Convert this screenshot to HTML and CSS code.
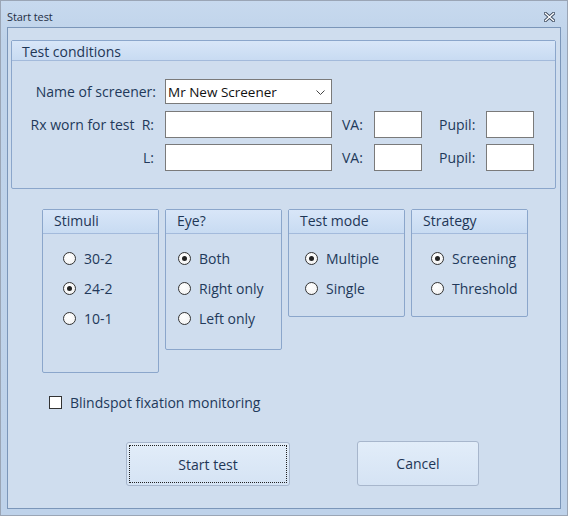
FILE: index.html
```html
<!DOCTYPE html>
<html>
<head>
<meta charset="utf-8">
<link rel="stylesheet" href="styles.css">
</head>
<body>
<div class="window">
  <div class="titlebar">
    <span class="title">Start test</span>
    <svg class="close" width="11" height="10" viewBox="0 0 11 10">
      <path d="M1.5 1.5 L9.5 8.5 M9.5 1.5 L1.5 8.5" stroke="#3c4a5e" stroke-width="3.2" stroke-linecap="square"/>
      <path d="M1.5 1.5 L9.5 8.5 M9.5 1.5 L1.5 8.5" stroke="#ffffff" stroke-width="1.4" stroke-linecap="square"/>
    </svg>
  </div>
  <div class="client">
    <div class="group conditions">
      <div class="ghead">Test conditions</div>
      <div class="cbody">
        <div class="row r1">
          <span class="lbl main">Name of screener:</span>
          <div class="combo">
            <span>Mr New Screener</span>
            <svg width="9" height="5" viewBox="0 0 9 5"><polyline points="0.5,0.5 4.5,4.5 8.5,0.5" fill="none" stroke="#444" stroke-width="1"/></svg>
          </div>
        </div>
        <div class="row r2">
          <span class="lbl main">Rx worn for test&nbsp; R:</span>
          <div class="field wide"></div>
          <span class="lbl va">VA:</span>
          <div class="field small"></div>
          <span class="lbl pupil">Pupil:</span>
          <div class="field small"></div>
        </div>
        <div class="row r3">
          <span class="lbl main">L:</span>
          <div class="field wide"></div>
          <span class="lbl va">VA:</span>
          <div class="field small"></div>
          <span class="lbl pupil">Pupil:</span>
          <div class="field small"></div>
        </div>
      </div>
    </div>

    <div class="options">
      <div class="group opt stimuli">
        <div class="ghead">Stimuli</div>
        <div class="obody">
          <div class="radio"><span class="dot"></span>30-2</div>
          <div class="radio"><span class="dot on"></span>24-2</div>
          <div class="radio"><span class="dot"></span>10-1</div>
        </div>
      </div>
      <div class="group opt eye">
        <div class="ghead">Eye?</div>
        <div class="obody">
          <div class="radio"><span class="dot on"></span>Both</div>
          <div class="radio"><span class="dot"></span>Right only</div>
          <div class="radio"><span class="dot"></span>Left only</div>
        </div>
      </div>
      <div class="group opt mode">
        <div class="ghead">Test mode</div>
        <div class="obody">
          <div class="radio"><span class="dot on"></span>Multiple</div>
          <div class="radio"><span class="dot"></span>Single</div>
        </div>
      </div>
      <div class="group opt strategy">
        <div class="ghead">Strategy</div>
        <div class="obody">
          <div class="radio"><span class="dot on"></span>Screening</div>
          <div class="radio"><span class="dot"></span>Threshold</div>
        </div>
      </div>
    </div>

    <div class="check"><span class="box"></span>Blindspot fixation monitoring</div>

    <div class="buttons">
      <div class="btn start"><span class="focus">Start test</span></div>
      <div class="btn cancel">Cancel</div>
    </div>
  </div>
</div>
</body>
</html>
```
FILE: styles.css
```css
* { box-sizing: border-box; }
html, body { margin: 0; padding: 0; }
body {
  width: 568px;
  height: 516px;
  overflow: hidden;
  font-family: "Open Sans", "Noto Sans", sans-serif;
  color: #22395a;
}
.window {
  width: 568px;
  height: 516px;
  border: 1px solid #9aa5b5;
  background: linear-gradient(#c7d9ee, #bfd3ea 40px, #bed2ea);
  padding: 0 6px 6px 6px;
  display: flex;
  flex-direction: column;
}
.titlebar {
  height: 26px;
  display: flex;
  align-items: center;
  justify-content: space-between;
  padding: 0 6px 0 0;
}
.title {
  font-size: 11px;
  color: #1f2f44;
  margin-top: 4px;
  letter-spacing: -0.1px;
}
.close { margin-top: 5px; }
.client {
  flex: 1;
  border: 1px solid #7b96b9;
  background: #cfddee;
  padding: 12px 0 0 3px;
}
.group {
  border: 1px solid #8ba6cb;
  border-radius: 2px;
  background: #cfddee;
}
.ghead {
  background: linear-gradient(#d8e6f8, #c8dbf2);
  border-bottom: 1px solid #a3badb;
  font-size: 14px;
  color: #1e3656;
  line-height: 21px;
  height: 20px;
  padding-left: 10px;
}
.conditions { width: 545px; height: 149px; }
.cbody { padding: 18px 0 0 0; }
.row { display: flex; align-items: center; }
.r1 { height: 25px; }
.r2 { height: 27px; margin-top: 7px; }
.r3 { height: 27px; margin-top: 6px; }
.lbl { font-size: 14px; color: #22395a; white-space: nowrap; }
.lbl.main { width: 144px; text-align: right; margin-right: 9px; }
.r2 .lbl.main, .r3 .lbl.main { width: 142px; margin-right: 11px; }
.combo {
  width: 167px;
  height: 25px;
  background: #fff;
  border: 1px solid #7a7a7a;
  display: flex;
  align-items: center;
  justify-content: space-between;
  padding: 0 6px 0 2px;
  font-size: 13.5px;
  color: #111;
}
.combo svg { margin-top: 1px; }
.field { height: 27px; background: #fff; border: 1px solid #7a7a7a; }
.field.wide { width: 167px; }
.field.small { width: 48px; }
.lbl.va { margin-left: 10px; width: 32px; }
.lbl.pupil { margin-left: 17px; width: 47px; }

.options {
  display: flex;
  align-items: flex-start;
  gap: 6px;
  margin: 20px 0 0 31px;
}
.opt { width: 117px; }
.opt .ghead { height: 24px; line-height: 22px; padding-left: 11px; }
.stimuli { height: 164px; }
.eye { height: 141px; }
.mode, .strategy { height: 108px; }
.obody { padding-top: 9px; }
.radio {
  height: 30px;
  display: flex;
  align-items: center;
  font-size: 14px;
  color: #22395a;
}
.stimuli .radio { padding-left: 20px; }
.eye .radio { padding-left: 12px; }
.mode .radio { padding-left: 16px; }
.strategy .radio { padding-left: 19px; }
.dot {
  width: 13px;
  height: 13px;
  border: 1px solid #333;
  border-radius: 50%;
  background: radial-gradient(circle at 40% 35%, #ffffff, #f0f0f0);
  margin-right: 8px;
  position: relative;
  flex: none;
}
.dot.on::after {
  content: "";
  position: absolute;
  left: 3px;
  top: 3px;
  width: 5px;
  height: 5px;
  border-radius: 50%;
  background: #222;
}
.check {
  display: flex;
  align-items: center;
  height: 20px;
  margin: 19px 0 0 38px;
  font-size: 14px;
  color: #22395a;
}
.box {
  width: 13px;
  height: 13px;
  border: 1px solid #333;
  background: #fff;
  margin-right: 8px;
}
.buttons {
  display: flex;
  align-items: flex-start;
  margin: 29px 0 0 115px;
}
.btn {
  border: 1px solid #a7b6cc;
  border-radius: 3px;
  background: linear-gradient(#e2edf9, #d5e3f4);
  display: flex;
  align-items: center;
  justify-content: center;
  font-size: 14px;
  color: #1e3656;
}
.start { width: 164px; height: 44px; margin-top: 1px; padding: 2px; }
.focus {
  width: 100%;
  height: 100%;
  border: 1px dotted #222;
  display: flex;
  align-items: center;
  justify-content: center;
}
.cancel { width: 122px; height: 45px; margin-left: 67px; }
```
